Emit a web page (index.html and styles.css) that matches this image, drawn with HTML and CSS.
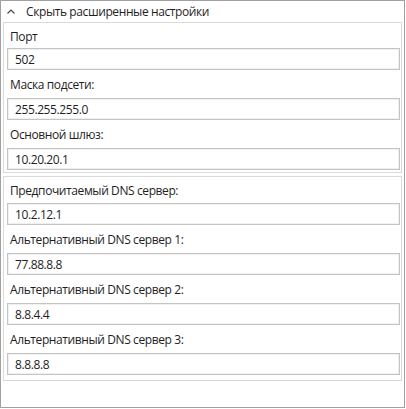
FILE: index.html
```html
<!DOCTYPE html>
<html>
	<head>
		<meta charset="utf-8" />
		<title>Сетевые настройки</title>
		<link rel="stylesheet" href="styles.css">
	</head>
	<body>
		<div class="panel">
			<div class="toggle">
				<svg class="chevron" width="8" height="5" viewBox="0 0 8 5">
					<path d="M0.5 4.5 L4 1 L7.5 4.5" fill="none" stroke="#444" stroke-width="1.1" />
				</svg>
				<span>Скрыть расширенные настройки</span>
			</div>

			<div class="group group-first">
				<div class="label">Порт</div>
				<input class="box" type="text" value="502" />
				<div class="label">Маска подсети:</div>
				<input class="box" type="text" value="255.255.255.0" />
				<div class="label">Основной шлюз:</div>
				<input class="box" type="text" value="10.20.20.1" />
			</div>

			<div class="group group-dns">
				<div class="label">Предпочитаемый DNS сервер:</div>
				<input class="box" type="text" value="10.2.12.1" />
				<div class="label">Альтернативный DNS сервер 1:</div>
				<input class="box" type="text" value="77.88.8.8" />
				<div class="label">Альтернативный DNS сервер 2:</div>
				<input class="box" type="text" value="8.8.4.4" />
				<div class="label">Альтернативный DNS сервер 3:</div>
				<input class="box" type="text" value="8.8.8.8" />
			</div>
		</div>
	</body>
</html>
```

FILE: styles.css
```css
* {
	margin: 0;
	padding: 0;
	box-sizing: border-box;
}

body {
	background: #fff;
	font-family: "Open Sans", "Noto Sans", sans-serif;
	font-size: 12px;
	letter-spacing: -0.4px;
	color: #1e1e1e;
}

.panel {
	width: 405px;
	height: 408px;
	border: 1px solid #a0a0a0;
	background: #fff;
}

.toggle {
	height: 21px;
	display: flex;
	align-items: center;
	padding-left: 6px;
}

.chevron {
	display: block;
	margin-right: 11px;
}

.group {
	display: flex;
	flex-direction: column;
	margin: 0 2px 0 2px;
	padding: 0 1px 0 3px;
	border: 1px solid #dadada;
}

.group-first {
	padding-bottom: 2px;
}

.group-dns {
	margin-top: 3px;
	padding-bottom: 5px;
}

.label {
	height: 28px;
	display: flex;
	align-items: center;
	padding-left: 3px;
	padding-top: 1px;
}

.group-first .label:first-child {
	height: 25px;
}

.group-dns .label:first-child {
	height: 26px;
}

.box {
	display: block;
	width: 100%;
	height: 22px;
	border: 1px solid #c4c4c4;
	box-shadow: inset 0 0 0 1px #f0f0f0;
	padding: 0 7px;
	font-family: inherit;
	font-size: 12px;
	letter-spacing: -0.4px;
	color: #1e1e1e;
	background: #fff;
	outline: none;
}
```
